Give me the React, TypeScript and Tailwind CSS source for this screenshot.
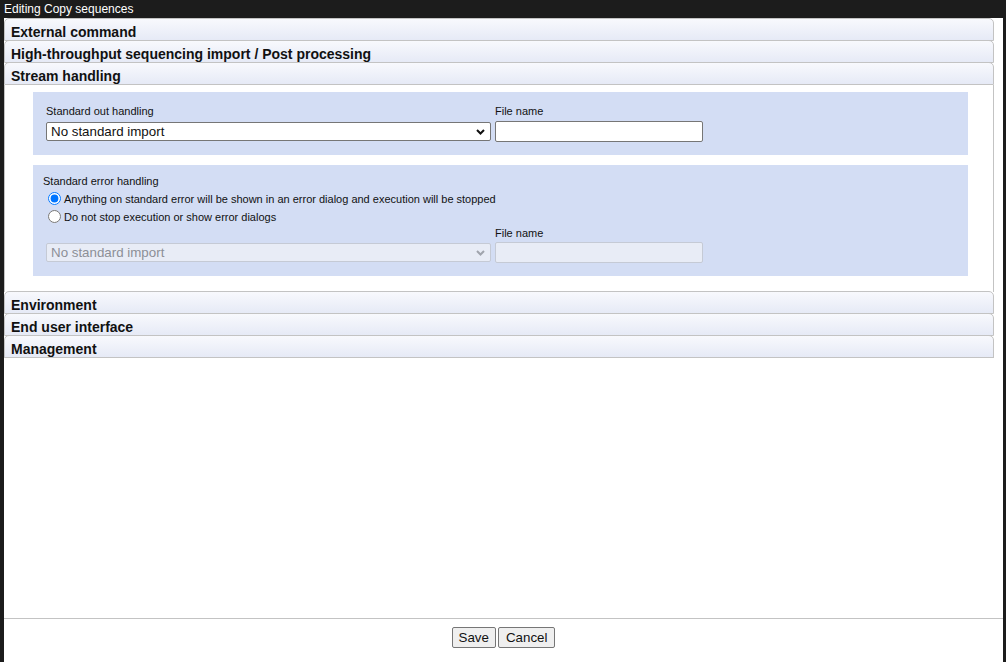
import React from "react";

const sections = ["External command", "High-throughput sequencing import / Post processing", "Stream handling"];
const lower = ["Environment", "End user interface", "Management"];

function Header({ title }: { title: string }) {
  return (
    <div className="-mt-px first:mt-0 h-[23px] border border-[#c3c3c3] rounded-t-[5px] bg-gradient-to-b from-[#f8f9fd] to-[#e6eaf6] pl-[6px] pt-[5px] text-[14px] leading-[16px] font-bold text-[#111]">
      {title}
    </div>
  );
}

function Chevron({ disabled }: { disabled?: boolean }) {
  return (
    <svg width="9" height="6" viewBox="0 0 9 6" className="shrink-0">
      <path d="M1 1l3.5 3.5L8 1" fill="none" stroke={disabled ? "#a0a4ad" : "#111"} strokeWidth="2" />
    </svg>
  );
}

function FakeSelect({ disabled }: { disabled?: boolean }) {
  return (
    <div
      className={
        disabled
          ? "w-[445px] h-[19px] flex items-center justify-between pl-[4px] pr-[5px] border border-[#c5cad5] rounded-[2px] bg-[#e8ecf6] text-[13.33px] text-[#8c8f96]"
          : "w-[445px] h-[19px] flex items-center justify-between pl-[4px] pr-[5px] border border-[#767676] rounded-[2px] bg-white text-[13.33px] text-[#111]"
      }
    >
      <span className="leading-[16px]">No standard import</span>
      <Chevron disabled={disabled} />
    </div>
  );
}

function FileInput({ disabled }: { disabled?: boolean }) {
  return (
    <div
      className={
        disabled
          ? "w-[208px] h-[21px] border border-[#c5cad5] rounded-[2px] bg-[#e8ecf6]"
          : "w-[208px] h-[21px] border border-[#767676] rounded-[2px] bg-white"
      }
    />
  );
}

export default function App() {
  return (
    <div className="w-[1006px] h-[662px] flex flex-col bg-[#1c1c1c] overflow-hidden font-['Liberation_Sans',Arial,sans-serif]">
      <div className="h-[18px] pl-[4px] text-[12px] leading-[18px] text-white shrink-0">Editing Copy sequences</div>

      <div className="flex-1 flex flex-col ml-[4px] mr-[3px] bg-white">
        <div className="w-[990px] flex flex-col">
          {sections.map((s) => (
            <Header key={s} title={s} />
          ))}

          <div className="h-[207px] border-x border-[#c3c3c3] pt-[7px]">
            {/* standard out */}
            <div className="ml-[28px] w-[935px] bg-[#d3ddf4] pl-[13px] pt-[13px] pb-[13px] text-[11px] text-[#111]">
              <div className="grid grid-cols-[445px_208px] gap-x-[4px]">
                <div className="h-[16px] leading-[13px]">Standard out handling</div>
                <div className="h-[16px] leading-[13px]">File name</div>
                <div className="h-[21px] flex items-center">
                  <FakeSelect />
                </div>
                <FileInput />
              </div>
            </div>

            {/* standard error */}
            <div className="ml-[28px] mt-[10px] w-[935px] bg-[#d3ddf4] pl-[10px] pt-[10px] pb-[13px] text-[11px] text-[#111]">
              <div className="h-[14px] leading-[13px]">Standard error handling</div>
              <label className="h-[18px] flex items-start">
                <input type="radio" name="err" defaultChecked className="ml-[5px] mr-[3px] mt-[3px] w-[13px] h-[13px]" />
                <span className="mt-[4px] leading-[13px]">
                  Anything on standard error will be shown in an error dialog and execution will be stopped
                </span>
              </label>
              <label className="h-[18px] flex items-start">
                <input type="radio" name="err" className="ml-[5px] mr-[3px] mt-[3px] w-[13px] h-[13px]" />
                <span className="mt-[4px] leading-[13px]">Do not stop execution or show error dialogs</span>
              </label>
              <div className="mt-[2px] ml-[3px] grid grid-cols-[445px_208px] gap-x-[4px]">
                <div className="h-[15px]" />
                <div className="h-[15px] leading-[13px]">File name</div>
                <div className="h-[21px] flex items-center">
                  <FakeSelect disabled />
                </div>
                <FileInput disabled />
              </div>
            </div>
          </div>

          {lower.map((s) => (
            <Header key={s} title={s} />
          ))}
          <div className="-mt-px border-t border-[#c3c3c3]" />
        </div>

        <div className="flex-1" />

        <div className="h-[44px] shrink-0 border-t border-[#c3c3c3] pt-[8px] flex justify-center gap-[2px] text-[13.33px] text-[#111]">
          <button className="h-[21px] px-[6px] border border-[#767676] rounded-[2px] bg-[#efefef] leading-[16px]">Save</button>
          <button className="h-[21px] px-[7px] border border-[#767676] rounded-[2px] bg-[#efefef] leading-[16px]">Cancel</button>
        </div>
      </div>
    </div>
  );
}
